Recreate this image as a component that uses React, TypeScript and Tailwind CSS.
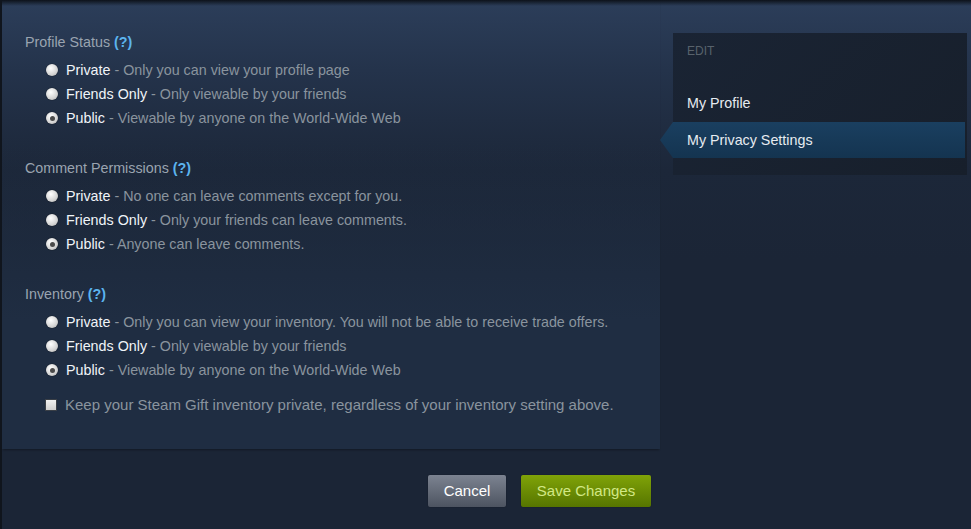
import React from 'react';

type Option = { label: string; desc: string; checked?: boolean };

const sections: { title: string; options: Option[] }[] = [
  {
    title: 'Profile Status',
    options: [
      { label: 'Private', desc: 'Only you can view your profile page' },
      { label: 'Friends Only', desc: 'Only viewable by your friends' },
      { label: 'Public', desc: 'Viewable by anyone on the World-Wide Web', checked: true },
    ],
  },
  {
    title: 'Comment Permissions',
    options: [
      { label: 'Private', desc: 'No one can leave comments except for you.' },
      { label: 'Friends Only', desc: 'Only your friends can leave comments.' },
      { label: 'Public', desc: 'Anyone can leave comments.', checked: true },
    ],
  },
  {
    title: 'Inventory',
    options: [
      { label: 'Private', desc: 'Only you can view your inventory. You will not be able to receive trade offers.' },
      { label: 'Friends Only', desc: 'Only viewable by your friends' },
      { label: 'Public', desc: 'Viewable by anyone on the World-Wide Web', checked: true },
    ],
  },
];

function Radio({ checked }: { checked?: boolean }) {
  return (
    <span className="w-[12px] h-[12px] rounded-full bg-[radial-gradient(circle_at_40%_35%,#ffffff,#d4d4d4_60%,#a8a8a8)] shadow-[0_0_1px_#000] flex items-center justify-center shrink-0">
      {checked && <span className="w-[5px] h-[5px] rounded-full bg-[#4a4a4a]" />}
    </span>
  );
}

function Section({ title, options }: { title: string; options: Option[] }) {
  return (
    <div>
      <div className="h-[20px] leading-[20px] text-[14.3px] text-[#9aa4b0]">
        {title} <span className="text-[#5cb4ee] font-bold">(?)</span>
      </div>
      <div className="mt-[6px] pl-[21px]">
        {options.map((o) => (
          <div key={o.label} className="h-[24px] flex items-center">
            <Radio checked={o.checked} />
            <span className="ml-[8px] text-[14.3px] leading-[20px] text-[#f0f4f8]">{o.label}</span>
            <span className="text-[14.3px] leading-[20px] text-[#8a949e]">&nbsp;- {o.desc}</span>
          </div>
        ))}
      </div>
    </div>
  );
}

export default function App() {
  return (
    <div
      className="relative w-[971px] h-[529px] overflow-hidden bg-[linear-gradient(to_bottom,#2c3e5a_0px,#24334b_70px,#1c2739_170px,#1b2536_260px)] border-l-2 border-[#10151d]"
      style={{ fontFamily: '"Liberation Sans", Arial, sans-serif' }}
    >
      <div className="absolute inset-x-0 top-0 h-[6px] bg-[linear-gradient(to_bottom,#0d121a,transparent)]" />
      <div className="flex">
        <div className="w-[658px] shrink-0">
          <div className="bg-[linear-gradient(to_bottom,rgba(31,45,66,0)_0px,rgba(31,45,66,0)_140px,rgba(31,45,66,1)_320px)] shadow-[0_2px_2px_-1px_rgba(0,0,0,0.35)] pl-[23px] pt-[32px] pb-[32px] flex flex-col gap-[28px]">
            {sections.map((s) => (
              <Section key={s.title} title={s.title} options={s.options} />
            ))}
            <div className="-mt-[17px] pl-[20px] h-[24px] flex items-center">
              <span className="w-[12px] h-[12px] bg-[linear-gradient(to_bottom,#f0f0f0,#cfcfcf)] border border-[#3a3f46] shrink-0" />
              <span className="ml-[8px] text-[15px] text-[#8a949e]">
                Keep your Steam Gift inventory private, regardless of your inventory setting above.
              </span>
            </div>
          </div>
          <div className="flex justify-end gap-[15px] pr-[9px] mt-[26px]">
            <button className="w-[78px] h-[32px] rounded-[2px] bg-[linear-gradient(to_bottom,#7c8391,#4d5461)] text-white text-[15px] shadow-[0_0_1px_rgba(0,0,0,0.6)]">
              Cancel
            </button>
            <button className="w-[130px] h-[32px] rounded-[2px] bg-[linear-gradient(to_bottom,#80a308,#567500)] text-[#d2e885] text-[15px] shadow-[0_0_1px_rgba(0,0,0,0.6)]">
              Save Changes
            </button>
          </div>
        </div>
        <div className="ml-[13px] mt-[33px] w-[294px] h-[142px] bg-[linear-gradient(135deg,#1a2434,#171f2b)] pt-[11px]">
          <div className="pl-[14px] text-[12px] leading-[14px] text-[#58626c] uppercase">Edit</div>
          <div className="mt-[27px] h-[36px] pl-[14px] pt-[2px] flex items-center text-[14.3px] text-[#e6ebf0]">My Profile</div>
          <div className="-ml-[13px] mt-[1px] w-[305px] h-[36px] pl-[27px] pt-[2px] flex items-center text-[14.3px] text-[#e6ebf0] bg-[linear-gradient(to_bottom,#1a3f60,#143450)] [clip-path:polygon(13px_0,100%_0,100%_100%,13px_100%,0_50%)]">
            My Privacy Settings
          </div>
        </div>
      </div>
    </div>
  );
}
